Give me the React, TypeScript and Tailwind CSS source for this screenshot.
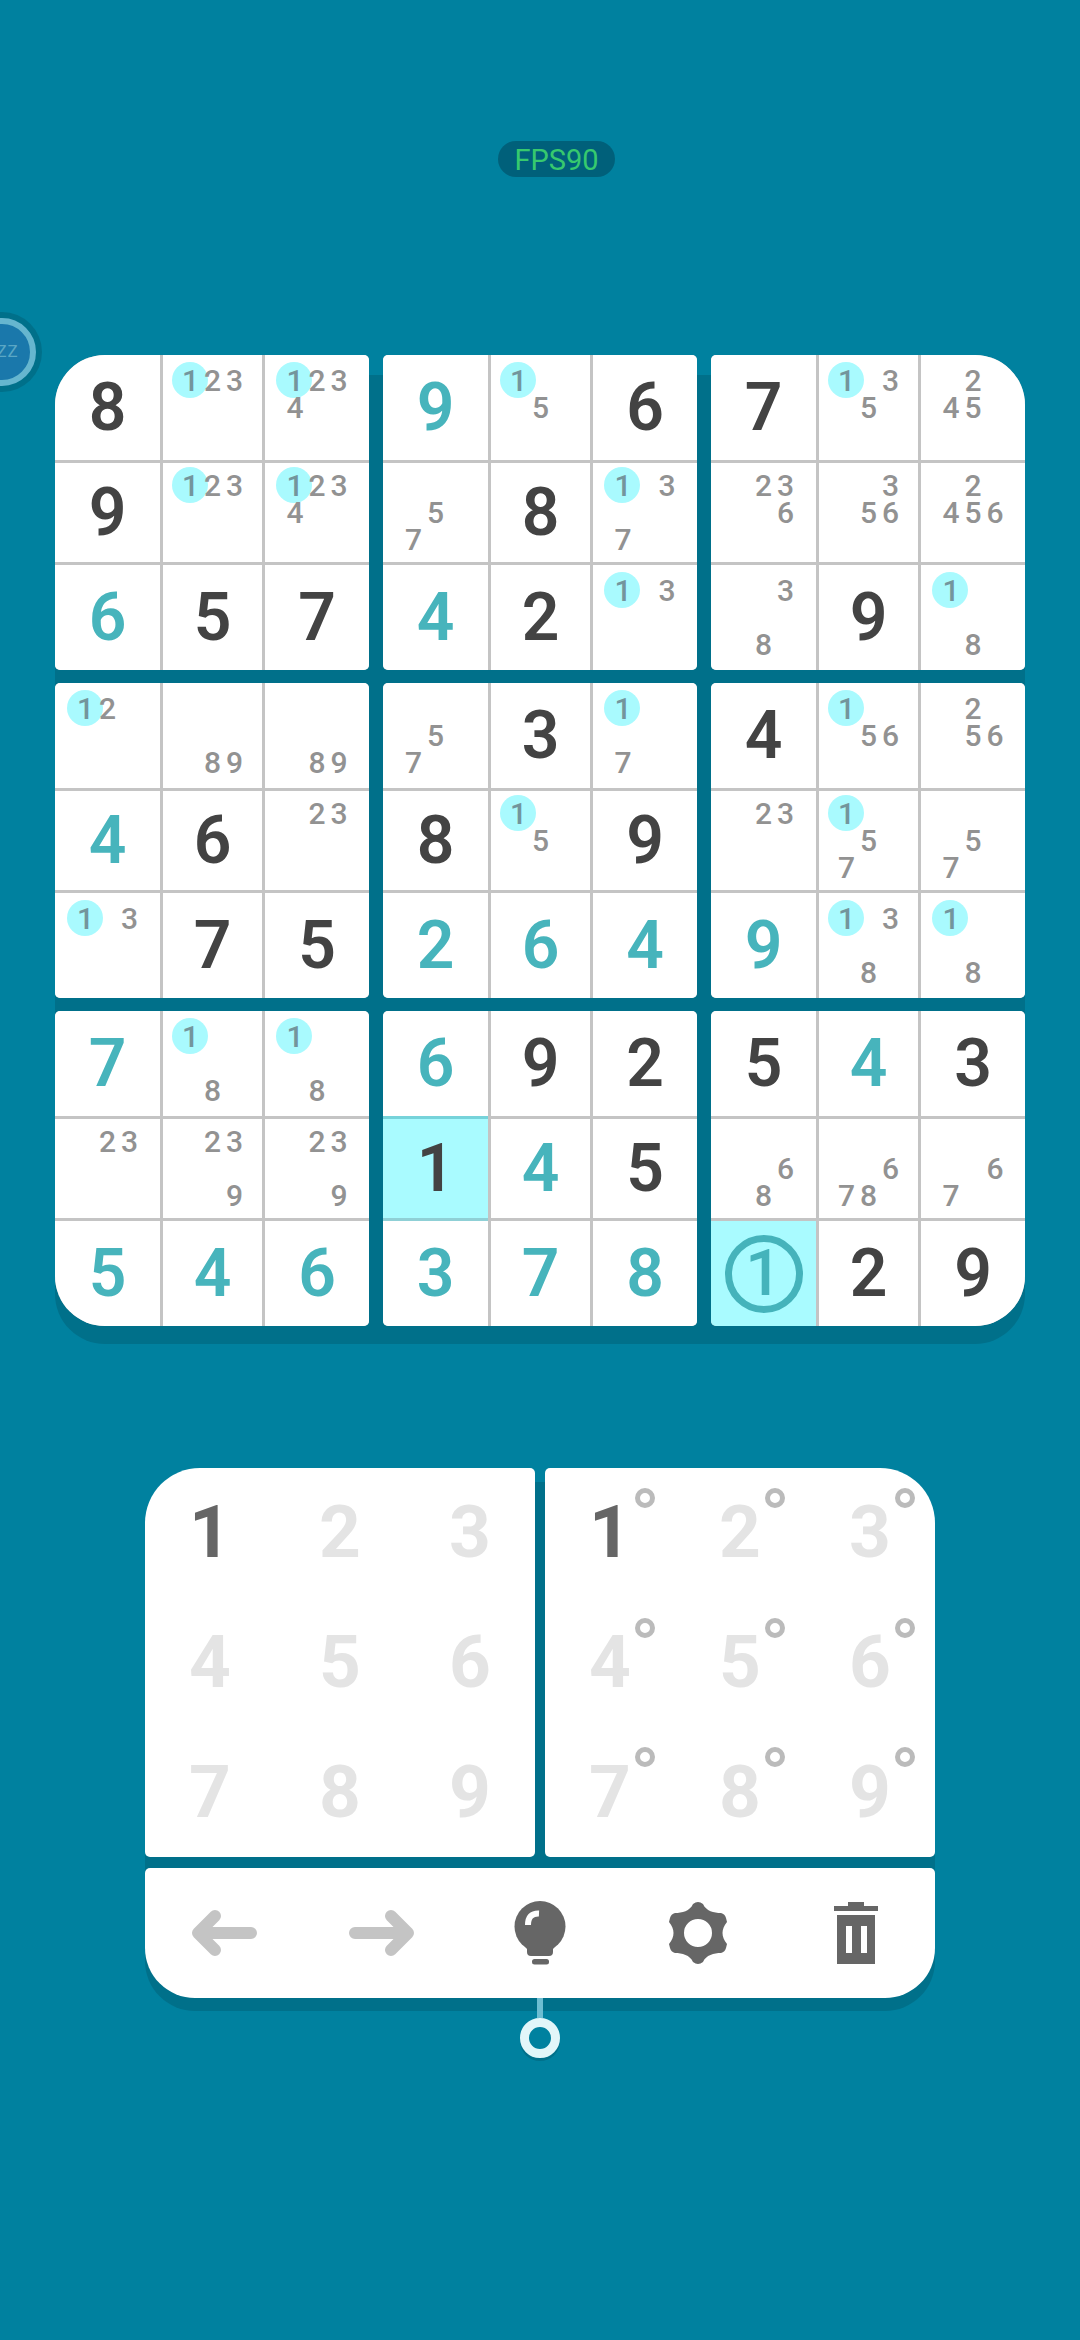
import { ReactNode } from "react";

type Cell =
  | { v: number; kind?: "given" | "user" | "selected" | "focus" }
  | { marks: number[] };

const d = (v: number): Cell => ({ v });
const t = (v: number): Cell => ({ v, kind: "user" });
const m = (...marks: number[]): Cell => ({ marks });

const boxes: Cell[][] = [
  [d(8), m(1, 2, 3), m(1, 2, 3, 4), d(9), m(1, 2, 3), m(1, 2, 3, 4), t(6), d(5), d(7)],
  [t(9), m(1, 5), d(6), m(5, 7), d(8), m(1, 3, 7), t(4), d(2), m(1, 3)],
  [d(7), m(1, 3, 5), m(2, 4, 5), m(2, 3, 6), m(3, 5, 6), m(2, 4, 5, 6), m(3, 8), d(9), m(1, 8)],
  [m(1, 2), m(8, 9), m(8, 9), t(4), d(6), m(2, 3), m(1, 3), d(7), d(5)],
  [m(5, 7), d(3), m(1, 7), d(8), m(1, 5), d(9), t(2), t(6), t(4)],
  [d(4), m(1, 5, 6), m(2, 5, 6), m(2, 3), m(1, 5, 7), m(5, 7), t(9), m(1, 3, 8), m(1, 8)],
  [t(7), m(1, 8), m(1, 8), m(2, 3), m(2, 3, 9), m(2, 3, 9), t(5), t(4), t(6)],
  [t(6), d(9), d(2), { v: 1, kind: "selected" }, t(4), d(5), t(3), t(7), t(8)],
  [d(5), t(4), d(3), m(6, 8), m(6, 7, 8), m(6, 7), { v: 1, kind: "focus" }, d(2), d(9)],
];

const boxCorners: Record<number, string> = {
  0: "rounded-tl-[50px]",
  2: "rounded-tr-[50px]",
  6: "rounded-bl-[50px]",
  8: "rounded-br-[50px]",
};

function Marks({ marks }: { marks: number[] }) {
  return (
    <div className="grid grid-cols-[22px_22px_22px] grid-rows-[27px_27px_27px] place-items-center">
      {[1, 2, 3, 4, 5, 6, 7, 8, 9].map((n) => (
        <div key={n} className="relative flex h-[27px] w-[22px] items-center justify-center">
          {marks.includes(n) && n === 1 && (
            <div className="absolute top-[-5px] left-[-8px] h-[36px] w-[36px] rounded-full bg-[#a9fafe]" />
          )}
          {marks.includes(n) && (
            <div
              className={`relative text-[30px] leading-[26px] font-medium ${n === 1 ? "text-[#73959c]" : "text-[#929292]"}`}
            >
              {n}
            </div>
          )}
        </div>
      ))}
    </div>
  );
}

function SudokuCell({ cell }: { cell: Cell }) {
  if ("marks" in cell) {
    return (
      <div className="flex items-center justify-center bg-white">
        <Marks marks={cell.marks} />
      </div>
    );
  }
  if (cell.kind === "focus") {
    return (
      <div className="flex items-center justify-center bg-[#a9fbff]">
        <div className="flex h-[78px] w-[78px] items-center justify-center rounded-full border-[7px] border-[#45b3bb] text-[64px] leading-none font-medium text-[#45b3bb]">
          1
        </div>
      </div>
    );
  }
  if (cell.kind === "selected") {
    return (
      <div className="flex items-center justify-center bg-[#a9fbff] text-[66px] leading-none font-semibold text-[#434343] shadow-[0_-3px_0_#76d3da,0_3px_0_#8fd0d6]">
        {cell.v}
      </div>
    );
  }
  return (
    <div
      className={`flex items-center justify-center bg-white text-[66px] leading-none font-semibold ${cell.kind === "user" ? "text-[#47b4bc]" : "text-[#434343]"}`}
    >
      {cell.v}
    </div>
  );
}

function KeyPanel({ corner, notes }: { corner: string; notes?: boolean }) {
  return (
    <div className={`grid h-[389px] w-[390px] grid-cols-3 grid-rows-3 rounded-[5px] bg-white ${corner}`}>
      {[1, 2, 3, 4, 5, 6, 7, 8, 9].map((n) => (
        <div
          key={n}
          className={`relative flex items-center justify-center text-[73px] leading-none font-bold ${n === 1 ? "text-[#666666]" : "text-[#e4e4e4]"}`}
        >
          {n}
          {notes && (
            <div className="absolute top-[20px] left-[90px] h-[20px] w-[20px] rounded-full border-[5px] border-[#bbbbbb]" />
          )}
        </div>
      ))}
    </div>
  );
}

function ToolButton({ children }: { children: ReactNode }) {
  return <div className="flex items-center justify-center">{children}</div>;
}

export default function App() {
  return (
    <div className="relative h-[2340px] w-[1080px] overflow-hidden bg-[#00819f] font-['Roboto',sans-serif]">
      {/* FPS */}
      <div className="flex justify-center pt-[141px] pl-[33px]">
        <div className="flex h-[36px] w-[117px] items-center justify-center rounded-full bg-[#00607a] pt-[2px] text-[29px] leading-none text-[#37c96e]">
          FPS90
        </div>
      </div>

      {/* Sleep badge */}
      <div className="absolute top-[312px] left-[-38px] flex h-[80px] w-[80px] items-center justify-center rounded-full bg-[#00708a]">
        <div className="flex h-[68px] w-[68px] items-center justify-center rounded-full border-[6px] border-[#66b6cf] bg-[#1a78ab] text-[17px] tracking-[1px] text-[#5aa7c5]">
          ZZZ
        </div>
      </div>

      {/* Board */}
      <div className="relative mt-[178px] ml-[55px] w-[970px]">
        <div className="absolute inset-x-0 top-[20px] bottom-[-18px] rounded-[50px] bg-[#00708a]" />
        <div className="relative grid grid-cols-3 gap-x-[14px] gap-y-[13px]">
          {boxes.map((box, i) => (
            <div
              key={i}
              className={`grid h-[315px] w-[314px] grid-cols-[105px_99px_104px] grid-rows-[105px_99px_105px] gap-[3px] overflow-hidden rounded-[5px] bg-[#c4c4c4] ${boxCorners[i] ?? ""}`}
            >
              {box.map((cell, j) => (
                <SudokuCell key={j} cell={cell} />
              ))}
            </div>
          ))}
        </div>
      </div>

      {/* Keypad */}
      <div className="mt-[142px] ml-[145px] flex w-[790px] flex-col items-center">
        <div className="relative w-full">
          <div className="absolute inset-x-0 top-[14px] bottom-[-13px] rounded-[50px] bg-[#00708a]" />
          <div className="relative flex w-full gap-[10px]">
            <KeyPanel corner="rounded-tl-[55px]" />
            <KeyPanel corner="rounded-tr-[55px]" notes />
          </div>
          <div className="relative mt-[11px] grid h-[130px] w-full grid-cols-5 rounded-t-[5px] rounded-b-[50px] bg-white">
            <ToolButton>
              <svg width="66" height="46" viewBox="0 0 66 46">
                <path d="M24 6 L7 23 L24 40 M8 23 H60" fill="none" stroke="#c4c4c4" strokeWidth="12" strokeLinecap="round" strokeLinejoin="round" />
              </svg>
            </ToolButton>
            <ToolButton>
              <svg width="66" height="46" viewBox="0 0 66 46">
                <path d="M42 6 L59 23 L42 40 M58 23 H6" fill="none" stroke="#c4c4c4" strokeWidth="12" strokeLinecap="round" strokeLinejoin="round" />
              </svg>
            </ToolButton>
            <ToolButton>
              <svg width="52" height="64" viewBox="0 0 52 64">
                <circle cx="26" cy="25.5" r="25.5" fill="#666666" />
                <path d="M10 44 L13 48 V51 Q13 55 17 55 H35 Q39 55 39 51 V48 L42 44 Z" fill="#666666" />
                <rect x="18" y="58" width="17" height="5.5" rx="2.5" fill="#666666" />
                <path d="M14 24 Q14 12 25 12.5" fill="none" stroke="#ffffff" strokeWidth="6" />
              </svg>
            </ToolButton>
            <ToolButton>
              <svg width="58" height="62" viewBox="0 0 58 62">
                <path
                  fillRule="evenodd"
                  d="M24 2 Q29 -2 34 2 C37 9 45 11 52 11 Q56 12 57 16 L58 20 C52 27 52 35 58 42 L57 46 Q56 50 52 51 C45 51 37 53 34 60 Q29 64 24 60 C21 53 13 51 6 51 Q2 50 1 46 L0 42 C6 35 6 27 0 20 L1 16 Q2 12 6 11 C13 11 21 9 24 2 Z M29 17 A14 14 0 1 0 29 45 A14 14 0 1 0 29 17 Z"
                  fill="#666666"
                />
              </svg>
            </ToolButton>
            <ToolButton>
              <svg width="44" height="62" viewBox="0 0 44 62">
                <path d="M14 0 H30 V4 H44 V9 H0 V4 H14 Z" fill="#666666" />
                <path
                  fillRule="evenodd"
                  d="M3 13 H41 V62 H3 Z M12 24 V51 H18 V24 Z M27 24 V51 H33 V24 Z"
                  fill="#666666"
                />
              </svg>
            </ToolButton>
          </div>
        </div>

        {/* Hint marker */}
        <div className="relative h-[20px] w-[6px] bg-[#6dbdd1]" />
        <div className="relative h-[40px] w-[40px] rounded-full border-[9px] border-[#e2f6f9] shadow-[0_3px_0_#00708a]" />
      </div>
    </div>
  );
}
